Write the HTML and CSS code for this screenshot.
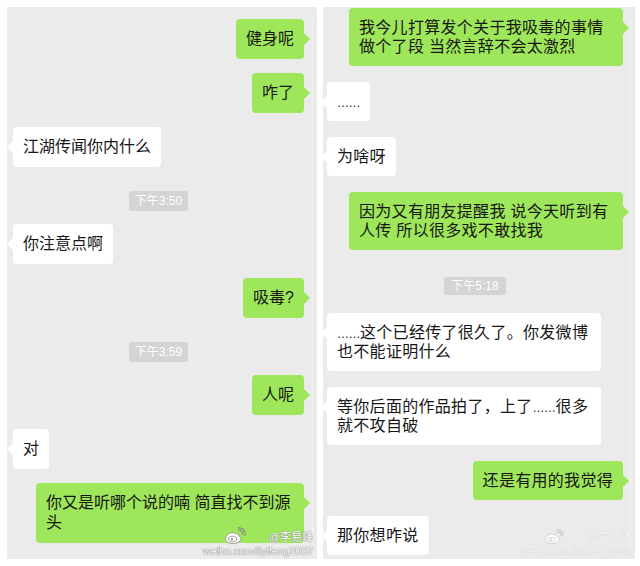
FILE: index.html
```html
<!DOCTYPE html>
<html lang="zh-CN">
<head>
  <meta charset="UTF-8">
  <meta name="viewport" content="width=device-width, initial-scale=1.0">
  <title>聊天记录</title>
  <link rel="stylesheet" href="styles.css">
</head>
<body>
  <div class="page">
    <!-- left screenshot -->
    <section class="chat chat-left">
      <div class="msg me">健身呢</div>
      <div class="msg me">咋了</div>
      <div class="msg">江湖传闻你内什么</div>
      <div class="time">下午3:50</div>
      <div class="msg">你注意点啊</div>
      <div class="msg me">吸毒?</div>
      <div class="time">下午3:59</div>
      <div class="msg me">人呢</div>
      <div class="msg">对</div>
      <div class="msg me wide">你又是听哪个说的喃 简直找不到源<br>头</div>

      <div class="mark">
        <svg class="weibo" viewBox="0 0 22 18" width="22" height="18">
          <path d="M9 5.5c-3.5 0-7.5 3-7.5 6.3 0 3 3.4 4.8 7.3 4.8 4.6 0 8-2.5 8-5 0-1.6-1.4-2.3-2.3-2.6.7-1.5.2-2.6-1.6-2.4-.9.1-1.7.5-1.7.5s.3-1.6-2.2-1.6z" class="wb-body"/>
          <ellipse cx="8.5" cy="12" rx="4.2" ry="2.8" class="wb-eye"/>
          <circle cx="7.8" cy="12.3" r="1.2" class="wb-pupil"/>
          <path d="M14.5 3.2a3.6 3.6 0 0 1 4.2 4.4" class="wb-arc"/>
          <path d="M14.2 0.9a6 6 0 0 1 6.8 7.3" class="wb-arc"/>
        </svg>
        <span class="mark-name">@李易峰</span>
        <span class="mark-url">weibo.com/liyifeng2007</span>
      </div>
    </section>

    <!-- right screenshot -->
    <section class="chat chat-right">
      <div class="msg me wide">我今儿打算发个关于我吸毒的事情<br>做个了段 当然言辞不会太激烈</div>
      <div class="msg"><span class="dots">……</span></div>
      <div class="msg">为啥呀</div>
      <div class="msg me wide">因为又有朋友提醒我 说今天听到有<br>人传 所以很多戏不敢找我</div>
      <div class="time">下午5:18</div>
      <div class="msg wide"><span class="dots">……</span>这个已经传了很久了。你发微博<br>也不能证明什么</div>
      <div class="msg wide">等你后面的作品拍了，上了<span class="dots">……</span>很多<br>就不攻自破</div>
      <div class="msg me">还是有用的我觉得</div>
      <div class="msg">那你想咋说</div>

      <div class="mark faint">
        <svg class="weibo" viewBox="0 0 22 18" width="20" height="16">
          <path d="M9 5.5c-3.5 0-7.5 3-7.5 6.3 0 3 3.4 4.8 7.3 4.8 4.6 0 8-2.5 8-5 0-1.6-1.4-2.3-2.3-2.6.7-1.5.2-2.6-1.6-2.4-.9.1-1.7.5-1.7.5s.3-1.6-2.2-1.6z" class="wb-body"/>
          <ellipse cx="8.5" cy="12" rx="4.2" ry="2.8" class="wb-eye"/>
          <circle cx="7.8" cy="12.3" r="1.2" class="wb-pupil"/>
          <path d="M14.5 3.2a3.6 3.6 0 0 1 4.2 4.4" class="wb-arc"/>
          <path d="M14.2 0.9a6 6 0 0 1 6.8 7.3" class="wb-arc"/>
        </svg>
        <span class="mark-name">@李易峰</span>
        <span class="mark-url">weibo.com/liyifeng2007</span>
      </div>
    </section>
  </div>
</body>
</html>
```

FILE: styles.css
```css
body {
  margin: 0;
  background-color: #fff;
  font-family: "Noto Sans CJK SC", "Noto Sans", sans-serif;
}
.page {
  display: flex;
  gap: 6px;
  width: 640px;
  height: 566px;
  padding: 7px 5px 7px 7px;
  box-sizing: border-box;
}
.chat {
  position: relative;
  display: flex;
  flex-direction: column;
  height: 552px;
  background-color: #ebebeb;
  box-sizing: border-box;
  overflow: hidden;
}
/* faint scrollbar line near the right edge */
.chat::after {
  content: "";
  position: absolute;
  top: 12px;
  bottom: 12px;
  right: 4px;
  width: 1px;
  background-color: #f4f4f4;
}
.chat-left {
  width: 310px;
  padding: 12px 13px 0 6px;
  gap: 14px;
}
.chat-right {
  width: 312px;
  padding: 1px 12px 0 4px;
  gap: 16px;
}
.msg {
  position: relative;
  align-self: flex-start;
  padding: 10px;
  font-family: "Liberation Sans", "Noto Sans CJK SC", sans-serif;
  font-size: 16px;
  line-height: 20px;
  color: #161616;
  background-color: #fff;
  border-radius: 4px;
  white-space: nowrap;
}
.chat-right .msg {
  line-height: 19px;
  letter-spacing: 0.3px;
}
.msg::before {
  content: "";
  position: absolute;
  top: 14px;
  left: -6px;
  border-top: 6px solid transparent;
  border-bottom: 6px solid transparent;
  border-right: 6px solid #fff;
}
.msg.me {
  align-self: flex-end;
  background-color: #9ee65a;
}
.msg.me::before {
  left: auto;
  right: -6px;
  border-right: 0;
  border-left: 6px solid #9ee65a;
}
.chat-left .msg.wide {
  width: 248px;
}
.chat-right .msg.wide {
  width: 254px;
}
.dots {
  font-size: 12px;
  line-height: 1;
  letter-spacing: -0.5px;
}
.time {
  align-self: center;
  padding: 0 6px;
  margin: 10px 0 -1px;
  font-family: "Liberation Sans", "Noto Sans CJK SC", sans-serif;
  font-size: 12px;
  line-height: 20px;
  color: #fff;
  background-color: #d4d4d4;
  border-radius: 3px;
}
.chat-right .time {
  line-height: 18px;
  margin: 11px 0 2px;
  padding: 0 7px;
}
.mark {
  position: absolute;
  right: 4px;
  bottom: 2px;
  display: grid;
  grid-template-columns: auto auto;
  align-items: end;
  justify-items: end;
  font-family: "Liberation Sans", "Noto Sans CJK SC", sans-serif;
  color: #fff;
  text-shadow: 0 0 1px #777, 0 0 1px #777;
  z-index: 1;
}
.weibo {
  display: block;
  margin-right: 1px;
}
.wb-body {
  fill: #fff;
  stroke: #8a8a8a;
  stroke-width: 0.8;
}
.wb-eye {
  fill: none;
  stroke: #8a8a8a;
  stroke-width: 0.8;
}
.wb-pupil {
  fill: #9a9a9a;
}
.wb-arc {
  fill: none;
  stroke: #8a8a8a;
  stroke-width: 1.2;
  stroke-linecap: round;
}
.mark-name {
  font-size: 11px;
  line-height: 13px;
  padding-bottom: 1px;
}
.mark-url {
  grid-column: 1 / 3;
  font-size: 11px;
  line-height: 12px;
  letter-spacing: -0.2px;
}
.mark.faint {
  right: 3px;
  color: #fafafa;
  text-shadow: 0 0 1px #bbb;
}
.mark.faint .wb-body,
.mark.faint .wb-eye,
.mark.faint .wb-arc {
  stroke: #c4c4c4;
}
.mark.faint .wb-pupil {
  fill: #cfcfcf;
}
```
